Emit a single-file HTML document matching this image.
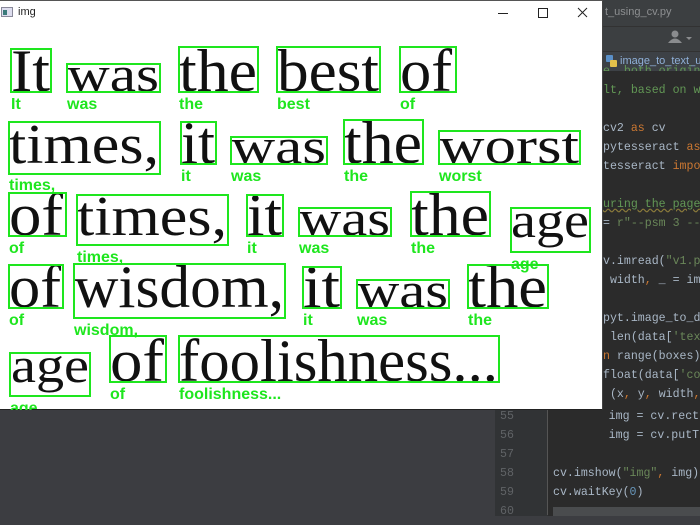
<!DOCTYPE html>
<html><head><meta charset="utf-8"><style>
*{margin:0;padding:0}
body{width:700px;height:525px;overflow:hidden;background:#2b2b2b;position:relative;font-family:"Liberation Sans",sans-serif}
.abs{position:absolute}
.code{position:absolute;font-family:"Liberation Mono",monospace;font-size:11.6px;color:#a9b7c6;white-space:pre;line-height:19px}
.k{color:#cc7832}.s{color:#6a8759}.c{color:#629755}.n{color:#606366}
</style></head><body>
<div class="abs" style="left:603px;top:0;width:97px;height:26px;background:#3c3f41;border-bottom:1px solid #323232"></div>
<div class="abs" style="left:605px;top:6px;font-size:11px;color:#8d8f91">t_using_cv.py</div>
<div class="abs" style="left:603px;top:27px;width:97px;height:24px;background:#3c3f41;border-bottom:1px solid #323232"></div>
<svg class="abs" style="left:664px;top:29px" width="36" height="18"><circle cx="11" cy="5" r="3.5" fill="#8a8c8e"/><path d="M4 14 Q11 5 18 14Z" fill="#8a8c8e"/><path d="M22 8 L28 8 L25 11Z" fill="#8a8c8e"/></svg>
<div class="abs" style="left:603px;top:52px;width:97px;height:19px;background:#3d4146"></div>
<svg class="abs" style="left:606px;top:55px" width="12" height="13"><rect x="0" y="0" width="7" height="7" rx="1" fill="#5a8fc7"/><rect x="4" y="5" width="7" height="7" rx="1" fill="#e3c04a"/></svg>
<div class="abs" style="left:620px;top:55px;font-size:11px;color:#8fb0d8">image_to_text_us</div>
<div class="code" style="left:603px;top:62px"><span class="c">e, both origin</span></div>
<div class="abs" style="left:603px;top:71px;width:97px;height:10px;background:#2b2b2b"></div>
<div class="code" style="left:603px;top:81px"><span class="c">lt, based on w</span>

<span>cv2 </span><span class="k">as</span> cv
<span>pytesseract </span><span class="k">as</span>
<span>tesseract </span><span class="k">impo</span>

<span class="c" style="text-decoration:underline wavy #8a7a3a">uring the page</span>
= <span class="s">r"--psm 3 --</span>

<span>v.imread(</span><span class="s">"v1.p</span>
 width<span class="k">,</span> _ = im

pyt.image_to_d
 len(data[<span class="s">'tex</span>
<span class="k">n</span> range(boxes)
float(data[<span class="s">'co</span>
 (x<span class="k">,</span> y<span class="k">,</span> width<span class="k">,</span></div>
<div class="abs" style="left:0;top:410px;width:495px;height:115px;background:#3c3d41"></div>
<div class="abs" style="left:495px;top:410px;width:53px;height:115px;background:#313335"></div>
<div class="abs" style="left:547px;top:410px;width:1px;height:105px;background:#555"></div>
<div class="code n" style="left:500px;top:407px">55
56
57
58
59
60</div>
<div class="code" style="left:553px;top:407px;background:#2b2b2b;width:147px">        img = cv.rect
        img = cv.putT

cv.imshow(<span class="s">"img"</span><span class="k">,</span> img)
cv.waitKey(<span style="color:#6897bb">0</span>)</div>
<div class="abs" style="left:553px;top:507px;width:147px;height:9px;background:#4a4c4e"></div>
<div class="abs" style="left:0;top:516px;width:700px;height:9px;background:#3c3d41"></div>
<div class="abs" style="left:0;top:0;width:603px;height:410px;background:#fff;border-top:1px solid #555;border-right:1px solid #444;border-bottom:1px solid #222;box-sizing:border-box"></div>
<svg class="abs" style="left:1px;top:7px" width="12" height="10"><rect x="0.5" y="0.5" width="11" height="9" fill="#dde" stroke="#889"/><rect x="2" y="3" width="4" height="5" fill="#3a7a7a"/></svg>
<div class="abs" style="left:18px;top:6px;font-size:11px;color:#222">img</div>
<svg class="abs" style="left:490px;top:4px" width="110" height="20" stroke="#222" fill="none" stroke-width="1"><path d="M8 9.5H18"/><rect x="48.5" y="4.5" width="9" height="9"/><path d="M88 4 L97 13 M97 4 L88 13"/></svg>
<svg class="abs" style="left:0;top:0" width="603" height="410" style="font-family:'Liberation Serif',serif">
<g fill="#111" font-size="60" font-family="Liberation Serif, serif">
<text x="11" y="91" textLength="39" lengthAdjust="spacingAndGlyphs">It</text>
<text x="67" y="91" textLength="92" lengthAdjust="spacingAndGlyphs" font-size="50">was</text>
<text x="179" y="91" textLength="78" lengthAdjust="spacingAndGlyphs">the</text>
<text x="277" y="91" textLength="102" lengthAdjust="spacingAndGlyphs">best</text>
<text x="400" y="91" textLength="52" lengthAdjust="spacingAndGlyphs">of</text>
<text x="9" y="163" textLength="150" lengthAdjust="spacingAndGlyphs" font-size="56">times,</text>
<text x="181" y="163" textLength="34" lengthAdjust="spacingAndGlyphs">it</text>
<text x="231" y="163" textLength="95" lengthAdjust="spacingAndGlyphs" font-size="50">was</text>
<text x="344" y="163" textLength="78" lengthAdjust="spacingAndGlyphs">the</text>
<text x="439" y="163" textLength="140" lengthAdjust="spacingAndGlyphs" font-size="52">worst</text>
<text x="9" y="235" textLength="54" lengthAdjust="spacingAndGlyphs">of</text>
<text x="77" y="235" textLength="150" lengthAdjust="spacingAndGlyphs" font-size="56">times,</text>
<text x="247" y="235" textLength="35" lengthAdjust="spacingAndGlyphs">it</text>
<text x="299" y="235" textLength="91" lengthAdjust="spacingAndGlyphs" font-size="50">was</text>
<text x="411" y="235" textLength="78" lengthAdjust="spacingAndGlyphs">the</text>
<text x="511" y="237" textLength="78" lengthAdjust="spacingAndGlyphs" font-size="50">age</text>
<text x="9" y="307" textLength="52" lengthAdjust="spacingAndGlyphs">of</text>
<text x="74" y="307" textLength="210" lengthAdjust="spacingAndGlyphs">wisdom,</text>
<text x="303" y="307" textLength="37" lengthAdjust="spacingAndGlyphs">it</text>
<text x="357" y="307" textLength="91" lengthAdjust="spacingAndGlyphs" font-size="50">was</text>
<text x="468" y="307" textLength="79" lengthAdjust="spacingAndGlyphs">the</text>
<text x="11" y="382" textLength="78" lengthAdjust="spacingAndGlyphs" font-size="50">age</text>
<text x="110" y="381" textLength="54" lengthAdjust="spacingAndGlyphs">of</text>
<text x="179" y="381" textLength="319" lengthAdjust="spacingAndGlyphs">foolishness...</text>
</g>
<g fill="none" stroke="#1ee61e" stroke-width="2">
<rect x="11" y="49" width="40" height="43"/><rect x="67" y="64" width="93" height="28"/><rect x="179" y="47" width="79" height="45"/><rect x="277" y="47" width="103" height="45"/><rect x="400" y="47" width="56" height="45"/>
<rect x="9" y="122" width="151" height="52"/><rect x="181" y="122" width="35" height="42"/><rect x="231" y="137" width="96" height="27"/><rect x="344" y="120" width="79" height="44"/><rect x="439" y="131" width="141" height="33"/>
<rect x="9" y="193" width="57" height="43"/><rect x="77" y="195" width="151" height="50"/><rect x="247" y="195" width="36" height="41"/><rect x="299" y="208" width="92" height="28"/><rect x="411" y="192" width="79" height="44"/><rect x="511" y="208" width="79" height="44"/>
<rect x="9" y="265" width="54" height="43"/><rect x="74" y="264" width="211" height="54"/><rect x="303" y="267" width="38" height="41"/><rect x="357" y="280" width="92" height="28"/><rect x="468" y="265" width="80" height="43"/>
<rect x="10" y="353" width="80" height="43"/><rect x="110" y="336" width="56" height="46"/><rect x="179" y="336" width="320" height="46"/>
</g>
<g fill="#1ee61e" font-family="Liberation Sans, sans-serif" font-weight="bold" font-size="16">
<text x="11" y="109">It</text><text x="67" y="109">was</text><text x="179" y="109">the</text><text x="277" y="109">best</text><text x="400" y="109">of</text>
<text x="9" y="190">times,</text><text x="181" y="181">it</text><text x="231" y="181">was</text><text x="344" y="181">the</text><text x="439" y="181">worst</text>
<text x="9" y="253">of</text><text x="77" y="262">times,</text><text x="247" y="253">it</text><text x="299" y="253">was</text><text x="411" y="253">the</text><text x="511" y="269">age</text>
<text x="9" y="325">of</text><text x="74" y="335">wisdom,</text><text x="303" y="325">it</text><text x="357" y="325">was</text><text x="468" y="325">the</text>
<text x="10" y="413">age</text><text x="110" y="399">of</text><text x="179" y="399">foolishness...</text>
</g>
</svg>
</body></html>
